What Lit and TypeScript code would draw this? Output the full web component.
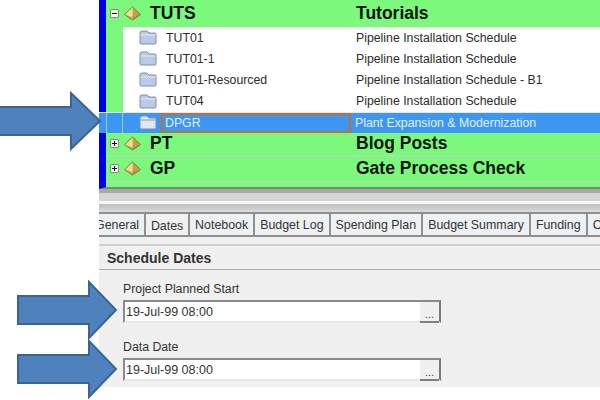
import { LitElement, html, css, svg } from "lit";
import { customElement } from "lit/decorators.js";

const diamond = svg`<svg class="dia" width="19" height="15" viewBox="0 0 18 15"><path d="M9 1 L17 8.5 L9 14 Z" fill="#bfa24a"/><path d="M9 1 L1 8.5 L9 14 Z" fill="#f2dd92"/><path d="M1 8.5 L9 11 L17 8.5 L9 14 Z" fill="#a78c3c" opacity=".55"/><path d="M9 1 L1 8.5 L9 14 L17 8.5 Z" fill="none" stroke="#7f6e32" stroke-width=".9"/></svg>`;
const folder = (open = false) => svg`<svg class="fold" width="18" height="15" viewBox="0 0 18 15"><path d="M1 3 Q1 1 3 1 H8 L10 3 H16 Q17 3 17 4 V13 Q17 14 16 14 H2 Q1 14 1 13 Z" fill="${open ? "#dfe6f0" : "#b9cbe6"}" stroke="#7f8fa8" stroke-width="1"/><path d="M1.5 5 H16.5" stroke="${open ? "#8a98ae" : "#e4ecf7"}" stroke-width="1"/></svg>`;

@customElement("app-root")
export class AppRoot extends LitElement {
  static styles = css`
    :host { display: block; width: 600px; height: 400px; position: relative; overflow: hidden; background: #fff;
      font-family: "Liberation Sans", Arial, sans-serif; color: #222; }
    .panel { margin-left: 99px; display: flex; flex-direction: column; height: 387px; background: #f0f0f0; }
    .tree { height: 189px; flex: none; background: #7cf87c; border-left: 7px solid #0000e6; border-bottom: 2px solid #6f8f6f; box-sizing: border-box; display: flex; flex-direction: column; }
    .grp { display: flex; align-items: center; font-weight: bold; font-size: 17.5px; color: #0a140a; border-bottom: 1px solid #a5e2a5; box-sizing: border-box; }
    .g0 { height: 27px; border-bottom: 0; }
    .g1 { height: 24px; border-bottom-width: 2px; }
    .g2 { height: 26px; border-bottom-width: 2px; }
    .box { width: 9px; height: 9px; margin-left: 4px; border: 1px solid #888; background: #f4f4f4; border-radius: 1px; position: relative; flex: none; box-sizing: border-box; }
    .box::before { content: ""; width: 5px; height: 1px; background: #111; position: absolute; left: 1px; top: 3px; }
    .plus::after { content: ""; width: 1px; height: 5px; background: #111; position: absolute; left: 3px; top: 1px; }
    .dia { margin-left: 4px; flex: none; }
    .code { margin-left: 8px; width: 206px; flex: none; }
    .kids { margin-left: 17px; background: #fff; display: flex; flex-direction: column; }
    .row { height: 21.2px; display: flex; align-items: center; font-size: 12.3px; color: #2b2b2b; }
    .fold { margin-left: 16px; flex: none; }
    .name { margin-left: 9px; width: 190px; flex: none; }
    .sel { height: 21px; margin-left: -24px; background: #3d96f2; color: #e4f0ff; display: flex; align-items: center; font-size: 12.3px; border-top: 1px solid #dfeaf5; box-sizing: border-box; position: relative; }
    .sel .fold { margin-left: 40px; }
    .sel .name { margin-left: 4px; width: 190px; height: 20px; box-sizing: border-box; border: 2px solid #c0702f; padding-left: 2px; display: flex; align-items: center; }
    .sel .desc { margin-left: 4px; }
    .sel::before { content: ""; position: absolute; left: 7px; top: 0; bottom: 0; width: 1px; background: #9cc8f5; }
    .sel::after { content: ""; position: absolute; left: 23px; top: 0; bottom: 0; width: 1px; background: #9cc8f5; }
    .gap { height: 12px; flex: none; background: linear-gradient(#a8a8a8 0 4px, #d6d6d6 4px); }
    .sep { height: 3px; flex: none; background: #f6f6f6; }
    .gap2 { height: 8px; flex: none; background: linear-gradient(#bcbcbc, #dcdcdc); }
    .tabs { display: flex; height: 25px; flex: none; box-sizing: border-box; border-bottom: 2px solid #8f8f8f; font-size: 12.4px; color: #333; overflow: hidden; }
    .tab { border-top: 2px solid #8f8f8f; border-right: 2px solid #8f8f8f; padding: 1px 5px 0; display: flex; align-items: center; white-space: nowrap; background: #eef1f4; box-sizing: border-box; height: 23px; flex: none; }
    .first { margin-left: -4px; padding: 1px 5px 0 0; }
    .active { background: #f0f0f0; height: 25px; width: 44px; justify-content: center; padding: 0; }
    .sp { height: 7px; flex: none; }
    .rule { height: 2px; flex: none; background: #d0d0d0; }
    .head { height: 24px; flex: none; display: flex; align-items: center; padding-left: 8px; font-weight: bold; font-size: 14px; color: #333; border-bottom: 1px solid #aaa; box-sizing: border-box; }
    .fields { padding: 11px 0 0 24px; display: flex; flex-direction: column; gap: 16px; }
    .lbl { font-size: 12.3px; color: #333; height: 16px; margin-bottom: 3px; display: flex; align-items: center; }
    .input { width: 318px; height: 23px; box-sizing: border-box; background: #fff; border: 2px solid #8a8a8a; border-right-color: #777; border-bottom-color: #e8e8e8; display: flex; align-items: center; padding-left: 1px; font-size: 12.5px; color: #333; position: relative; }
    .btn { position: absolute; right: 0; top: 0; bottom: -2px; width: 19px; background: #f0f0f0; border-bottom: 2px solid #808080; box-sizing: border-box; display: flex; align-items: flex-end; justify-content: center; font-size: 11px; line-height: 13px; color: #444; }
    .arrows { position: absolute; left: 0; top: 0; pointer-events: none; }
  `;

  render() {
    const kids = [
      ["TUT01", "Pipeline Installation Schedule"],
      ["TUT01-1", "Pipeline Installation Schedule"],
      ["TUT01-Resourced", "Pipeline Installation Schedule - B1"],
      ["TUT04", "Pipeline Installation Schedule"],
    ];
    const tabs = ["Notebook", "Budget Log", "Spending Plan", "Budget Summary", "Funding", "Codes"];
    const arrow = (x0: number, x1: number, xh: number, y: number, hh: number, bh: number) =>
      svg`<path d="M${x0} ${y - bh} H${xh} V${y - hh} L${x1} ${y} L${xh} ${y + hh} V${y + bh} H${x0} Z" fill="#4f81bd" stroke="#3a6496" stroke-width="2"/>`;
    return html`
      <div class="panel">
        <div class="tree">
          <div class="grp g0"><span class="box"></span>${diamond}<span class="code">TUTS</span><span>Tutorials</span></div>
          <div class="kids">
            ${kids.map(([a, b]) => html`<div class="row">${folder()}<span class="name">${a}</span><span>${b}</span></div>`)}
            <div class="sel">${folder(true)}<span class="name">DPGR</span><span class="desc">Plant Expansion &amp; Modernization</span></div>
          </div>
          <div class="grp g1"><span class="box plus"></span>${diamond}<span class="code">PT</span><span>Blog Posts</span></div>
          <div class="grp g2"><span class="box plus"></span>${diamond}<span class="code">GP</span><span>Gate Process Check</span></div>
        </div>
        <div class="gap"></div>
        <div class="sep"></div>
        <div class="gap2"></div>
        <div class="tabs">
          <div class="tab first">General</div>
          <div class="tab active">Dates</div>
          ${tabs.map((t) => html`<div class="tab">${t}</div>`)}
        </div>
        <div class="sp"></div>
        <div class="rule"></div>
        <div class="head">Schedule Dates</div>
        <div class="fields">
          <div><div class="lbl">Project Planned Start</div><div class="input">19-Jul-99 08:00<span class="btn">...</span></div></div>
          <div><div class="lbl">Data Date</div><div class="input">19-Jul-99 08:00<span class="btn">...</span></div></div>
        </div>
      </div>
      <svg class="arrows" width="600" height="400" viewBox="0 0 600 400">
        ${arrow(-2, 100, 71, 121, 28, 14)}
        ${arrow(18, 116, 89, 310, 28, 14)}
        ${arrow(18, 116, 89, 369, 28, 14)}
      </svg>
    `;
  }
}
